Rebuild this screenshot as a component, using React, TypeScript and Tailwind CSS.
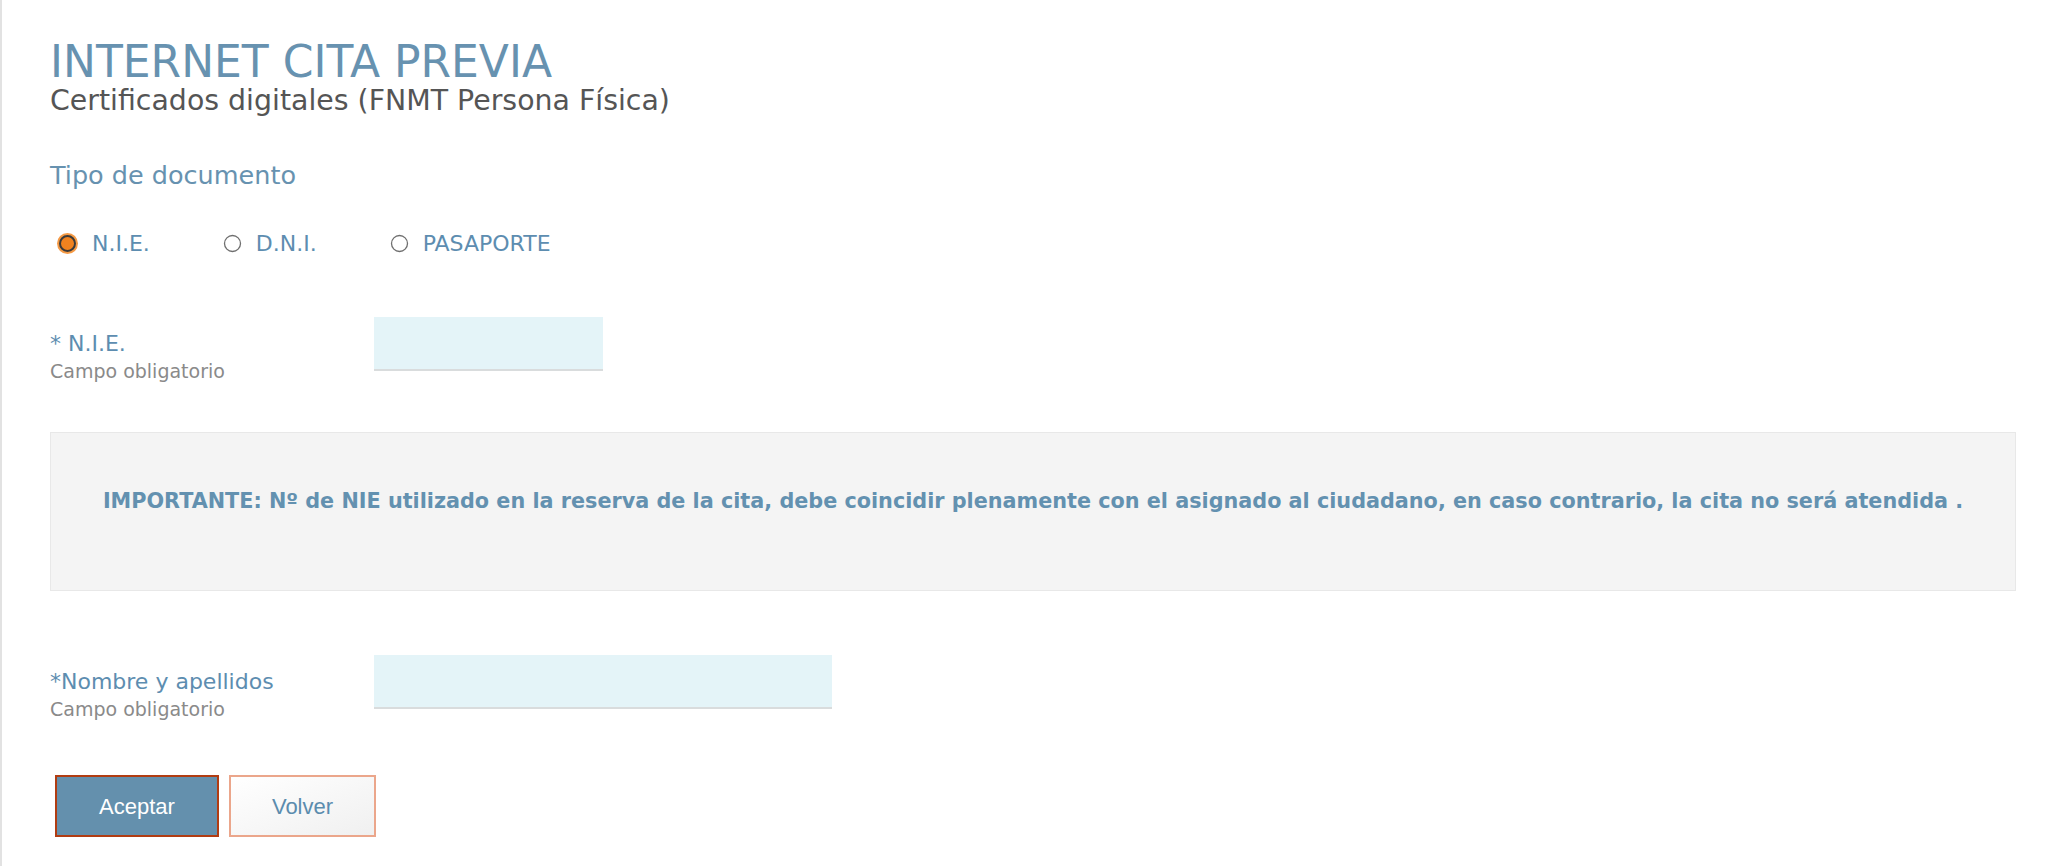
import React from "react";

const font = { fontFamily: '"DejaVu Sans", Verdana, sans-serif' };

function Radio({ checked }: { checked?: boolean }) {
  return (
    <svg width="21" height="21" viewBox="0 0 21 21" className="shrink-0">
      {checked ? (
        <>
          <circle cx="10.5" cy="10.5" r="10.5" fill="#f59a45" />
          <circle cx="10.5" cy="10.5" r="7.5" fill="#f0821f" stroke="#3a3a3a" strokeWidth="2" />
        </>
      ) : (
        <circle cx="10.5" cy="10.5" r="8" fill="#ffffff" stroke="#6f6f6f" strokeWidth="1.3" />
      )}
    </svg>
  );
}

function Field({ label, width }: { label: string; width: string }) {
  return (
    <div className="flex items-start">
      <div className="w-[324px] pt-[16px]">
        <div className="text-[22px] leading-[22px] text-[#5d8db0]">{label}</div>
        <div className="mt-[7px] text-[19px] leading-[19px] text-[#8a8a8a]">Campo obligatorio</div>
      </div>
      <input
        type="text"
        className={`${width} h-[54px] bg-[#e4f4f8] border-b-2 border-[#d9dcdd] outline-none`}
      />
    </div>
  );
}

export default function App() {
  return (
    <div className="min-h-[866px] bg-white border-l-2 border-[#e2e2e2] pl-[48px] pr-[32px] pt-[40px]" style={font}>
      <h1 className="text-[44px] leading-[44px] text-[#6792b0] font-normal">INTERNET CITA PREVIA</h1>
      <h2 className="mt-[3px] text-[28.4px] leading-[28px] text-[#555555]">Certificados digitales (FNMT Persona Física)</h2>

      <div className="mt-[48px] text-[25.5px] leading-[25px] text-[#6792b0]">Tipo de documento</div>

      <div className="mt-[43px] flex items-center h-[24px] pl-[7px] gap-[72px] text-[22px] text-[#5d8db0]">
        <label className="flex items-center gap-[14px]">
          <Radio checked />
          <span>N.I.E.</span>
        </label>
        <label className="flex items-center gap-[13px]">
          <Radio />
          <span>D.N.I.</span>
        </label>
        <label className="flex items-center gap-[13px]">
          <Radio />
          <span>PASAPORTE</span>
        </label>
      </div>

      <div className="mt-[62px]">
        <Field label="* N.I.E." width="w-[229px]" />
      </div>

      <div className="mt-[51px] h-[159px] border border-[#e8e8e8] bg-[#f4f4f4] pt-[56px] text-center">
        <p className="text-[20.75px] leading-[25px] font-bold text-[#6391b0]">
          IMPORTANTE: Nº de NIE utilizado en la reserva de la cita, debe coincidir plenamente con el asignado al ciudadano, en caso contrario, la cita no será atendida .
        </p>
      </div>

      <div className="mt-[64px]">
        <Field label="*Nombre y apellidos" width="w-[458px]" />
      </div>

      <div className="mt-[56px] ml-[5px] flex gap-[10px]" style={{ fontFamily: '"Liberation Sans", Arial, sans-serif' }}>
        <button className="w-[164px] h-[62px] bg-[#6490ad] border-2 border-[#b13c12] text-white text-[22px]">
          Aceptar
        </button>
        <button className="w-[147px] h-[62px] bg-gradient-to-br from-white to-[#f0f0f0] border-2 border-[#eba68b] text-[#5b8cae] text-[22px]">
          Volver
        </button>
      </div>
    </div>
  );
}
